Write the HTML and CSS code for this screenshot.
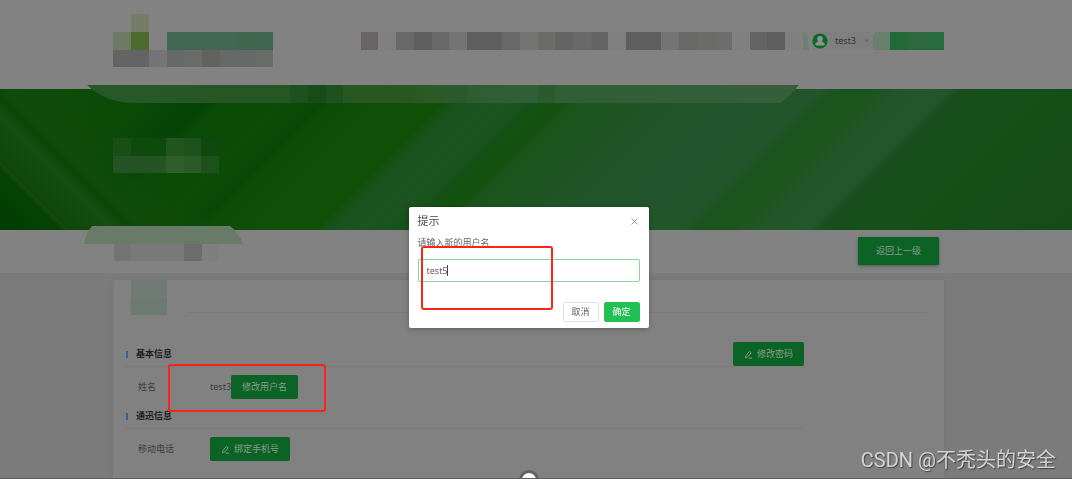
FILE: index.html
```html
<!DOCTYPE html>
<html lang="zh-CN">
<head>
<meta charset="utf-8">
<title>用户信息</title>
<link rel="stylesheet" href="styles.css">
</head>
<body>
<div class="page">
  <header class="header">
    <div class="container header-inner">
      <svg class="logo" width="160" height="54" viewBox="0 0 160 54" shape-rendering="crispEdges" aria-hidden="true">
        <path fill="#767b6a" d="M18 0h18v18H18z"/><path fill="#707868" d="M0 18h18v18H0z"/><path fill="#4d6b2e" d="M18 18h18v18H18z"/>
        <path fill="#446753" d="M54 18h106v18H54z"/><path fill="#416650" d="M125 18h18v18h-18z"/><path fill="#3e6550" d="M143 18h17v18h-17z"/>
        <path fill="#646464" d="M0 36h36v17H0z"/><path fill="#747474" d="M36 36h18v17H36z"/><path fill="#676969" d="M54 36h106v17H54z"/>
        <path fill="#6a6c6a" d="M71 36h18v17H71zM143 36h17v17h-17z"/><path fill="#626361" d="M89 36h18v17H89z"/>
      </svg>
      <svg class="nav" width="448" height="18" viewBox="0 0 448 18" shape-rendering="crispEdges" aria-hidden="true">
        <path fill="#7a7a7a" d="M0 0h442v18H0z"/>
        <path fill="#686466" d="M0 0h17v18H0z"/><path fill="#808080" d="M17 0h18v18H17zM247 0h18v18h-18zM371 0h18v18h-18zM424 0h18v18h-18z"/>
        <path fill="#696969" d="M35 0h18v18H35zM71 0h17v18H71zM141 0h18v18h-18zM212 0h18v18h-18zM318 0h18v18h-18z"/>
        <path fill="#5e5e5e" d="M53 0h18v18H53zM106 0h35v18h-35zM265 0h35v18h-35zM406 0h18v18h-18z"/>
        <path fill="#747474" d="M88 0h18v18H88zM159 0h18v18h-18zM300 0h18v18h-18z"/>
        <path fill="#6b6b67" d="M177 0h17v18h-17zM336 0h18v18h-18z"/><path fill="#646464" d="M194 0h18v18h-18zM230 0h17v18h-17zM389 0h17v18h-17z"/>
        <path fill="#6c6c6c" d="M354 0h17v18h-17z"/><path fill="#6c8170" d="M442 0h4l2 18h-6z"/>
      </svg>
      <button class="user" type="button">
        <svg width="16" height="16" viewBox="0 0 16 16" aria-hidden="true"><circle cx="8" cy="8" r="7.6" fill="#0a6b25"/><path fill="#929292" d="M8 3a2.8 2.8 0 0 0-2.8 2.8c0 1.2.5 2.2 1.3 2.8-2 .4-3.200 1.600-3.200 3.200 0 .5.3.8.8.8h7.800c.5 0 .8-.3.8-.8 0-1.600-1.200-2.800-3.200-3.200.8-.6 1.300-1.600 1.300-2.800A2.800 2.800 0 0 0 8 3z"/></svg>
        <span>test3</span>
        <svg class="caret" width="6" height="4" viewBox="0 0 6 4" aria-hidden="true"><path fill="#6b6b6b" d="M.5.5h5L3 3.500z"/></svg>
      </button>
      <svg class="nav-end" width="71" height="18" viewBox="0 0 71 18" shape-rendering="crispEdges" aria-hidden="true">
        <path fill="#6a806e" d="M2 0h15v18H0V4z"/><path fill="#246a39" d="M17 0h54v18H17z"/><path fill="#2c6a3e" d="M35 0h18v18H35z"/><path fill="#286c3d" d="M53 0h18v18H53z"/>
      </svg>
    </div>
  </header>

  <section class="banner">
    <svg class="banner-art" viewBox="0 0 1072 141" preserveAspectRatio="none" aria-hidden="true">
      <defs>
        <linearGradient id="sweep" gradientUnits="userSpaceOnUse" x1="0" y1="0" x2="600" y2="600">
          <stop offset="0" stop-color="#0f4c09"/><stop offset=".12" stop-color="#0b4b06"/><stop offset=".155" stop-color="#074607"/>
          <stop offset=".185" stop-color="#054407"/><stop offset=".195" stop-color="#094a06"/><stop offset=".25" stop-color="#0c4c06"/>
          <stop offset=".28" stop-color="#084806"/><stop offset=".29" stop-color="#0e4d08"/><stop offset=".36" stop-color="#115009"/>
          <stop offset=".38" stop-color="#0e5006"/><stop offset=".39" stop-color="#18521a"/><stop offset=".42" stop-color="#1c5423"/>
          <stop offset=".45" stop-color="#17521a"/><stop offset=".47" stop-color="#12510d"/><stop offset=".482" stop-color="#14510f"/><stop offset=".49" stop-color="#1b541a"/>
          <stop offset=".52" stop-color="#1c5420"/><stop offset=".58" stop-color="#22552a"/><stop offset=".65" stop-color="#22552b"/>
          <stop offset=".685" stop-color="#225529"/><stop offset=".7" stop-color="#1b541d"/><stop offset=".73" stop-color="#1c541e"/>
          <stop offset=".75" stop-color="#225528"/><stop offset=".79" stop-color="#24562d"/><stop offset=".802" stop-color="#184f1d"/>
          <stop offset=".87" stop-color="#164f18"/><stop offset=".91" stop-color="#154d17"/><stop offset=".95" stop-color="#164d1b"/><stop offset="1" stop-color="#154a19"/>
        </linearGradient>
        <linearGradient id="rays" gradientUnits="userSpaceOnUse" x1="-70" y1="70" x2="50" y2="-50">
          <stop offset="0" stop-color="#023d04"/><stop offset=".22" stop-color="#034104"/><stop offset=".26" stop-color="#0a4306"/><stop offset=".27" stop-color="#174a0c"/><stop offset=".285" stop-color="#0d4709"/>
          <stop offset=".4" stop-color="#114b0d"/><stop offset=".47" stop-color="#164e13"/><stop offset=".51" stop-color="#114c0c"/>
          <stop offset=".54" stop-color="#094806"/><stop offset=".59" stop-color="#0f4b0c"/><stop offset=".68" stop-color="#0f4c09" stop-opacity=".8"/><stop offset=".95" stop-color="#0f4c09" stop-opacity="0"/>
        </linearGradient>
      </defs>
      <path fill="url(#sweep)" d="M0 0h1072v141H0z"/>
      <path fill="url(#rays)" d="M0 0h100l141 141H0z"/>
    </svg>
    <svg class="strip" width="712" height="18" viewBox="0 0 712 18" aria-hidden="true">
      <defs><linearGradient id="strip"><stop offset="0" stop-color="#28572a"/><stop offset=".28" stop-color="#265622"/><stop offset=".45" stop-color="#2a5721"/><stop offset=".56" stop-color="#2f5e35"/><stop offset="1" stop-color="#365e3a"/></linearGradient></defs>
      <path fill="url(#strip)" d="M0 0h712q-7 9-19 18H50Q18 18 0 0z"/>
      <path fill="#174c18" d="M221 0h18v18h-18z"/><path fill="#1f5120" d="M203 0h18v18h-18zM239 0h17v18h-17z"/><path fill="#29592d" d="M362 0h18v18h-18z"/><path fill="#2a5a2d" d="M451 0h17v18h-17z"/>
    </svg>
    <div class="container">
      <svg width="106" height="36" viewBox="0 0 106 36" shape-rendering="crispEdges" aria-hidden="true">
        <path fill="#194f14" d="M0 0h18v18H0z"/><path fill="#0e4a0c" d="M18 0h35v18H18zM88 0h18v18H88z"/><path fill="#225621" d="M53 0h18v18H53z"/><path fill="#1c511b" d="M71 0h17v18H71z"/>
        <path fill="#245423" d="M0 18h53v17H0z"/><path fill="#305d2c" d="M53 18h18v17H53z"/><path fill="#2c5928" d="M71 18h17v17H71z"/><path fill="#1d501a" d="M88 18h18v17H88z"/>
      </svg>
    </div>
  </section>

  <section class="toolbar">
    <div class="container toolbar-inner">
      <svg class="crumb" width="159" height="36" viewBox="0 0 159 36" aria-hidden="true">
        <path fill="#687a68" d="M8 0h138q9 7 13 18H0Q2 7 8 0z"/><path fill="#747474" d="M30 18h17v17H30z"/><path fill="#797979" d="M47 18h53v17H47z"/><path fill="#6c6c6c" d="M100 18h18v17h-18z"/><path fill="#7f7f7f" d="M118 18h17v17h-17z"/>
      </svg>
      <button class="btn btn-back" type="button">返回上一级</button>
    </div>
  </section>

  <main class="content">
    <div class="container card">
      <div class="card-head">
        <svg width="36" height="36" viewBox="0 0 36 36" aria-hidden="true"><path fill="#6d7a72" d="M0 0h36v35H0z"/><path fill="#6f7b74" d="M0 0h36v18H0z"/></svg>
        <span class="card-line"></span>
      </div>
      <div class="details">
        <div class="section-head">
          <h2>基本信息</h2>
          <button class="btn" type="button"><svg class="pen" viewBox="0 0 10 10" aria-hidden="true"><path d="M2 6.500 6 1.500 8 3 4 8 1.500 8.500zM5 9h4"/></svg>修改密码</button>
        </div>
        <div class="row">
          <span class="label">姓名</span>
          <span class="value">test3</span>
          <button class="btn" type="button">修改用户名</button>
          <span class="mark mark-row"></span>
        </div>
        <div class="section-head">
          <h2>通迅信息</h2>
        </div>
        <div class="row">
          <span class="label">移动电话</span>
          <button class="btn" type="button"><svg class="pen" viewBox="0 0 10 10" aria-hidden="true"><path d="M2 6.500 6 1.500 8 3 4 8 1.500 8.500zM5 9h4"/></svg>绑定手机号</button>
        </div>
      </div>
    </div>
  </main>
  <span class="handle"></span>
</div>

<div class="overlay">
  <form class="dialog" role="dialog" aria-labelledby="dialog-title">
    <div class="dialog-head">
      <h1 id="dialog-title">提示</h1>
      <button class="close" type="button" aria-label="关闭"><svg width="7" height="7" viewBox="0 0 7 7" aria-hidden="true"><path fill="none" stroke="#909399" d="M.5.5l6 6M6.500.5l-6 6"/></svg></button>
    </div>
    <label for="username">请输入新的用户名</label>
    <div class="field">
      <input id="username" type="text" value="test5">
      <span class="cursor"></span>
    </div>
    <div class="actions">
      <button class="action" type="button">取消</button>
      <button class="action action-main" type="button">确定</button>
    </div>
    <span class="mark mark-dialog"></span>
  </form>
</div>
<div class="watermark">CSDN @不秃头的安全</div>
</body>
</html>
```

FILE: styles.css
```css
* { box-sizing: border-box; }
body {
  margin: 0;
  background: #7b7b7b;
  color: #3b3c3e;
  font: 9px/12px "Noto Sans", "Noto Sans CJK SC", sans-serif;
}
svg { display: block; flex: none; }
button, input { font: inherit; }
h1, h2 { margin: 0; }
.page {
  position: relative;
  display: flex;
  flex-direction: column;
  min-height: 100vh;
  overflow: hidden;
  border-bottom: 1px solid #5e5c5e;
}
.header, .banner, .toolbar, .content { padding-right: 15px; }
.container {
  width: calc(100% - 226px);
  margin: 0 auto;
}
.header {
  height: 89px;
  background: #828282;
}
.header-inner { display: flex; padding-top: 14px; }
.nav { margin: 18px 0 0 auto; }
.user {
  display: flex;
  align-items: center;
  gap: 7px;
  height: 18px;
  margin: 18px 0 0 3px;
  padding: 0;
  border: 0;
  background: #7f7f7f;
  color: #343434;
}
.caret { margin: 0 3px 0 1px; }
.nav-end { margin-top: 18px; }
.banner {
  position: relative;
  height: 141px;
  padding-top: 49px;
}
.banner-art { position: absolute; inset: 0; width: 100%; height: 100%; }
.banner .container { position: relative; }
.strip { position: absolute; left: 87px; top: -4px; }
.toolbar { height: 43px; background: #828282; }
.toolbar-inner {
  position: relative;
  display: flex;
  justify-content: flex-end;
  padding: 7px 5px 0 0;
}
.crumb { position: absolute; left: -29px; top: -4px; }
.btn {
  display: flex;
  align-items: center;
  justify-content: center;
  gap: 4px;
  height: 24px;
  padding: 0 11px;
  border: 0;
  border-radius: 2px;
  background: #0b6425;
  color: #8c9b8f;
  white-space: nowrap;
}
.btn-back {
  height: 28px;
  padding: 0 18px;
  border-radius: 1px;
  box-shadow: 0 1px 3px #555;
}
.pen { width: 9px; height: 9px; fill: none; stroke: #8c9b8f; stroke-width: 1; }
.content {
  display: flex;
  flex: 1;
  padding-top: 7px;
}
.card {
  padding-bottom: 11px;
  border-radius: 2px 2px 0 0;
  background: #818181;
  box-shadow: 0 0 4px #737373;
}
.card-head {
  display: flex;
  gap: 19px;
  height: 33px;
  margin: 0 17px 0 18px;
}
.card-line { flex: 1; border-bottom: 1px solid #777a7f; }
.details { margin: 29px 140px 0 11px; }
.section-head {
  display: flex;
  align-items: center;
  justify-content: space-between;
  height: 25px;
  border-bottom: 1px solid #7b7b7d;
}
.section-head h2 {
  padding-left: 10px;
  margin-left: 2px;
  color: #1b1b20;
  font-size: 9px;
  line-height: 12px;
  background: linear-gradient(#32628f, #32628f) 0 3px / 2px 7px no-repeat;
}
.row {
  position: relative;
  display: flex;
  align-items: center;
  margin: 8px 0 5px;
  padding-left: 14px;
}
.label { width: 72px; }
.value { width: 21px; white-space: nowrap; }
.mark {
  position: absolute;
  border: 2px solid #fb2416;
  border-radius: 3px;
  pointer-events: none;
}
.mark-row { left: 44px; top: -11px; width: 158px; height: 48px; }
.handle {
  position: absolute;
  left: calc(50% - 17px);
  bottom: -12px;
  width: 20px;
  height: 20px;
  border: 3px solid #616161;
  border-radius: 50%;
  background: #fff;
}
.overlay {
  position: fixed;
  inset: 0;
  display: flex;
  align-items: center;
  justify-content: center;
  padding: 56px 15px 0 0;
}
.dialog {
  position: relative;
  width: 240px;
  padding: 6px 9px;
  border-radius: 2px;
  background: #fff;
  box-shadow: 0 1px 5px #0004;
  color: #606266;
}
.dialog-head { display: flex; justify-content: space-between; align-items: center; }
.dialog h1 { color: #46484c; font-size: 11px; line-height: 16px; font-weight: 400; }
.close { padding: 0 2px; border: 0; background: none; }
.dialog label { display: block; margin-top: 8px; }
.field { position: relative; margin-top: 10px; }
.field input {
  display: block;
  width: 100%;
  height: 23px;
  padding: 0 8px;
  border: 1px solid #7fdb9c;
  border-radius: 2px;
  background: #fff;
  color: #606266;
  outline: 0;
}
.cursor { position: absolute; left: 29px; top: 6px; width: 1px; height: 11px; background: #444; }
.actions { display: flex; justify-content: flex-end; gap: 5px; margin-top: 20px; }
.action {
  width: 36px;
  height: 20px;
  padding: 0;
  border: 1px solid #dcdfe6;
  border-radius: 2px;
  background: #fff;
  color: #606266;
}
.action-main { border-color: #22bf55; background: #22bf55; color: #fff; }
.mark-dialog { left: 12px; top: 39px; width: 132px; height: 64px; }
.watermark {
  position: fixed;
  right: 16px;
  bottom: 5px;
  color: #d4d4d4;
  font: 20px/28px Roboto, "Noto Sans CJK SC", sans-serif;
  text-shadow: 1px 1px 1px #444;
}
```
